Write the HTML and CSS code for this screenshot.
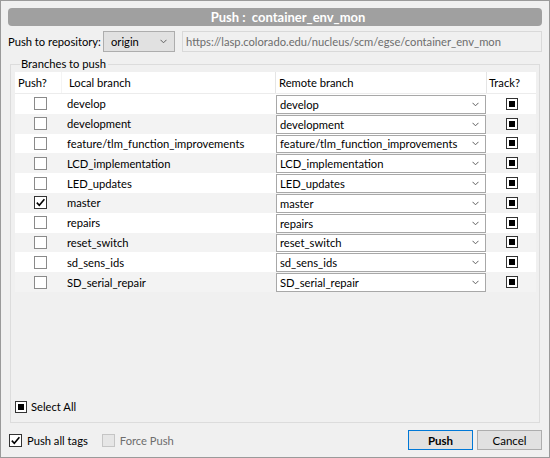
FILE: index.html
```html
<!DOCTYPE html>
<html>
<head>
<meta charset="utf-8">
<link rel="stylesheet" href="styles.css">
</head>
<body>
<div class="window">
  <div class="titlebar">Push :&nbsp; container_env_mon</div>
  <div class="repo-row">
    <span class="repo-label">Push to repository:</span>
    <div class="combo repo-combo"><span>origin</span><svg class="chev" width="7" height="5" viewBox="0 0 7 5"><path d="M0.5 0.8 L3.5 3.8 L6.5 0.8" fill="none" stroke="#606060" stroke-width="1"/></svg></div>
    <div class="url-field">https://lasp.colorado.edu/nucleus/scm/egse/container_env_mon</div>
  </div>
  <div class="group">
    <div class="group-title">Branches to push</div>
    <div class="table">
      <div class="thead">
        <div class="th th-push">Push?</div>
        <div class="th th-local">Local branch</div>
        <div class="th th-remote">Remote branch</div>
        <div class="th th-track">Track?</div>
      </div>
      <div id="rows"></div>
    </div>
    <div class="select-all">
      <span class="tri"></span><span>Select All</span>
    </div>
  </div>
  <div class="bottom-row">
    <label class="opt"><span class="cb checked"><svg width="11" height="11" viewBox="0 0 11 11"><path d="M1.8 5.6 L4.3 8.2 L9.4 2.2" fill="none" stroke="#000" stroke-width="1.6"/></svg></span>Push all tags</label>
    <label class="opt disabled"><span class="cb dis"></span>Force Push</label>
    <div class="spacer"></div>
    <button class="btn btn-default">Push</button>
    <button class="btn">Cancel</button>
  </div>
</div>
<script src="script.js"></script>
</body>
</html>
```

FILE: script.js
```js
var branches = ["develop","development","feature/tlm_function_improvements","LCD_implementation","LED_updates","master","repairs","reset_switch","sd_sens_ids","SD_serial_repair"];
var rows = document.getElementById("rows");
branches.forEach(function (b, i) {
  var r = document.createElement("div");
  r.className = "row" + (i % 2 ? " alt" : "");
  var checked = b === "master";
  r.innerHTML =
    '<div class="td td-push"><span class="cb' + (checked ? ' checked' : '') + '">' +
    (checked ? '<svg width="11" height="11" viewBox="0 0 11 11"><path d="M1.8 5.6 L4.3 8.2 L9.4 2.2" fill="none" stroke="#000" stroke-width="1.6"/></svg>' : '') +
    '</span></div>' +
    '<div class="td td-local">' + b + '</div>' +
    '<div class="td td-remote"><div class="rcombo"><span>' + b + '</span><svg class="chev" width="7" height="5" viewBox="0 0 7 5"><path d="M0.5 0.8 L3.5 3.8 L6.5 0.8" fill="none" stroke="#606060" stroke-width="1"/></svg></div></div>' +
    '<div class="td td-track"><span class="tri"></span></div>';
  rows.appendChild(r);
});
```

FILE: styles.css
```css
* { box-sizing: border-box; }
html, body { margin: 0; padding: 0; }
body {
  font-family: "Lato", "Open Sans", sans-serif;
  font-size: 11.2px;
  color: #000;
  background: #f0f0f0;
}
.window {
  width: 550px;
  height: 458px;
  border: 1px solid #9a9a9a;
  padding: 7px 7px 7px 7px;
  display: flex;
  flex-direction: column;
  background: #f0f0f0;
}
.titlebar {
  height: 18px;
  background: #a0a0a0;
  border-radius: 4px;
  color: #fff;
  font-weight: bold;
  font-size: 13px;
  text-align: center;
  line-height: 18px;
  padding-left: 26px;
}
.repo-row {
  margin-top: 5px;
  height: 21px;
  display: flex;
  align-items: stretch;
}
.repo-label { line-height: 21px; width: 95px; flex-shrink: 0; white-space: nowrap; }
.combo {
  border: 1px solid #adadad;
  background: #e1e1e1;
  display: flex;
  align-items: center;
  justify-content: space-between;
  padding: 0 7px 0 7px;
  flex-shrink: 0;
}
.repo-combo { width: 72px; }
.url-field {
  margin-left: 7px;
  flex: 1;
  min-width: 0;
  border: 1px solid #d9d9d9;
  background: #f0f0f0;
  color: #6d6d6d;
  line-height: 19px;
  padding-left: 3px;
  white-space: nowrap;
  overflow: hidden;
}
.group {
  margin: 12px 2px 0 2px;
  height: 359px;
  border: 1px solid #dcdcdc;
  padding: 0 3px 0 4px;
  display: flex;
  flex-direction: column;
}
.group-title {
  margin-top: -9px;
  margin-left: 5px;
  padding: 0 2px 0 1px;
  background: #f0f0f0;
  width: max-content;
  line-height: 16px;
}
.table { flex: 1; }
.thead {
  display: grid;
  grid-template-columns: 47px 214px 211px 1fr;
  height: 22px;
  background: #fff;
  border-bottom: 1px solid #ececec;
}
.th { line-height: 21px; border-right: 1px solid #e5e5e5; }
.th-push { padding-left: 3px; border-right-color: #f4f4f4; }
.th-local { padding-left: 7px; }
.th-remote { padding-left: 3px; }
.th-track { padding-left: 2px; border-right: none; }
.row {
  display: grid;
  grid-template-columns: 47px 214px 211px 1fr;
  height: 19.8px;
  background: #fff;
}
.row.alt { background: #f3f3f3; }
.td { display: flex; align-items: center; white-space: nowrap; }
.td-push { justify-content: center; padding-left: 3px; }
.td-local { padding-left: 5px; }
.td-remote { padding: 1px 1px 0 0; }
.td-track { justify-content: center; padding-left: 1px; }
.rcombo {
  width: 100%;
  height: 100%;
  background: #fff;
  border: 1px solid #a8a8a8;
  display: flex;
  align-items: center;
  justify-content: space-between;
  padding: 0 6px 0 3px;
}
.cb {
  width: 13px;
  height: 13px;
  border: 1px solid #8a8a8a;
  background: #fff;
  display: inline-flex;
  align-items: center;
  justify-content: center;
  flex-shrink: 0;
}
.cb.checked { border-color: #333; }
.cb.dis { border-color: #c5c5c5; background: #e6e6e6; }
.tri {
  width: 12px;
  height: 12px;
  border: 1px solid #333;
  background: #fff;
  padding: 2px;
  display: inline-block;
  flex-shrink: 0;
}
.tri::after {
  content: "";
  display: block;
  width: 6px;
  height: 6px;
  background: #000;
}
.select-all {
  display: flex;
  align-items: center;
  gap: 4px;
  height: 14px;
  margin-bottom: 8px;
  line-height: 14px;
}
.bottom-row {
  margin-top: 7px;
  height: 20px;
  display: flex;
  align-items: center;
}
.opt { display: flex; align-items: center; gap: 5px; }
.opt:first-child { margin-left: 1px; margin-right: 14px; }
.opt.disabled { color: #6d6d6d; }
.spacer { flex: 1; }
.btn {
  font-family: inherit;
  font-size: 11.5px;
  height: 20px;
  width: 65px;
  border: 1px solid #adadad;
  background: #e1e1e1;
  padding: 0;
  color: #000;
}
.btn-default { border-color: #0078d7; font-weight: bold; margin-right: 4px; }
```
